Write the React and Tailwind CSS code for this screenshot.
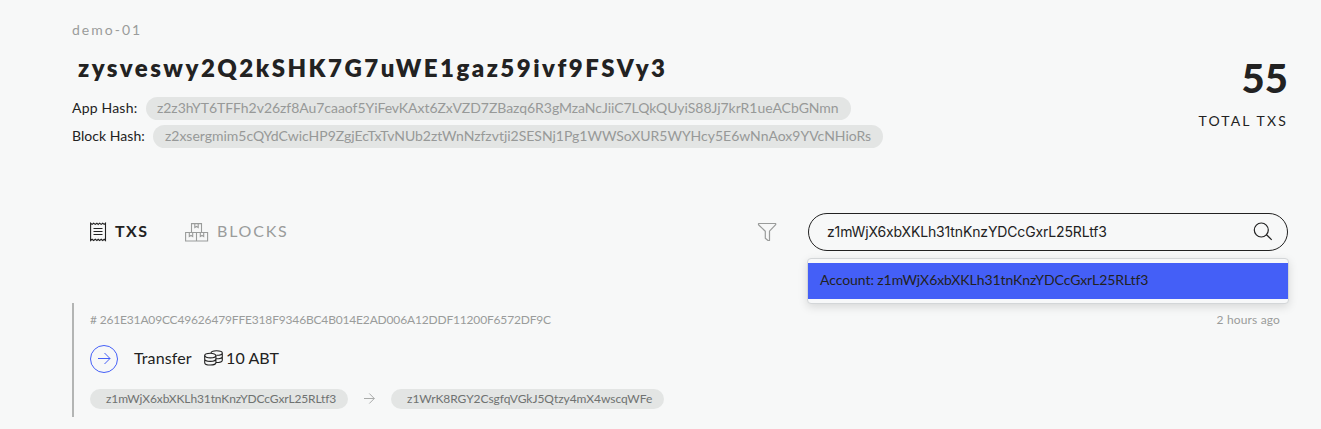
import React from "react";

function ReceiptIcon() {
  return (
    <svg width="17" height="20" viewBox="0 0 17 20" fill="none" stroke="#222" strokeWidth="1.1">
      <path d="M.6 1.2 2.1 2.400 3.600 1.200 5.300 2.400 6.900 1.200 8.200 2.400 9.600 1.200 11.200 2.400 12.700 1.200 14.200 2.400 15.500 1.200V18.500L14.200 17.300 12.700 18.500 11.200 17.300 9.600 18.500 8.200 17.300 6.900 18.500 5.300 17.300 3.600 18.500 2.100 17.300 .6 18.500Z" />
      <path d="M3.500 6.500h9M3.500 9.500h9M3.500 12.500h9" />
    </svg>
  );
}

function BoxesIcon() {
  return (
    <svg width="24" height="19" viewBox="0 0 24 19" fill="none" stroke="#9a9c9b" strokeWidth="1.1">
      <path d="M6.500 9.500V.6h10v8.900M.6 9.500h22v8.500H.6zM11.500 9.500v8.500" />
      <path d="M9.800.5v4l1.700-1 1.700 1v-4M4.300 9.500v4l1.700-1 1.700 1v-4M15.300 9.500v4l1.700-1 1.700 1v-4" />
    </svg>
  );
}

function FilterIcon() {
  return (
    <svg width="20" height="20" viewBox="0 0 20 20" fill="none" stroke="#9a9c9b" strokeWidth="1.2" strokeLinejoin="round">
      <path d="M1.500 1.500h17.200v1.200l-6.200 6.500v9.300h-1.500L8.300 16.300V9.200L1.500 2.700Z" />
    </svg>
  );
}

function SearchIcon() {
  return (
    <svg width="20" height="20" viewBox="0 0 20 20" fill="none" stroke="#222" strokeWidth="1.2">
      <circle cx="8.3" cy="7" r="7" className="translate-y-px" />
      <path d="m13.300 12.500 5.400 5.400" />
    </svg>
  );
}

function CoinsIcon() {
  return (
    <svg className="-mt-0.5" width="19" height="16" viewBox="0 0 19 16" fill="none" stroke="#222" strokeWidth="1.1">
      <ellipse cx="6.3" cy="5.6" rx="5.6" ry="2.3" />
      <path d="M.7 5.600v7.100c0 1.300 2.500 2.300 5.600 2.300s5.600-1 5.600-2.300V5.600M.7 9.100c0 1.300 2.500 2.300 5.600 2.300s5.600-1 5.600-2.300" />
      <path d="M7 3.300C7 1.800 9.400.8 12.500.8s5.800 1 5.800 2.200-2.700 2.300-5.800 2.300M18.300 3v7.200c0 1.200-2.700 2.300-6.300 2.300M18.300 6.500c0 1.300-2.700 2.300-6.300 2.300" />
    </svg>
  );
}

function Header() {
  return (
    <header className="flex h-[148px] justify-between pt-5">
      <div className="flex flex-col items-start">
        <div className="h-5 text-[14px] leading-5 tracking-[2px] text-[#9a9c9b]">demo-01</div>
        <h1 className="mt-[13px] h-8 pl-1.5 text-[24px] font-extrabold leading-[30px] tracking-[2.49px]">
          zysveswy2Q2kSHK7G7uWE1gaz59ivf9FSVy3
        </h1>
        <div className="mt-3 flex h-[23px] items-center text-[14px] leading-5">
          <span className="w-[74px] pb-0.5 tracking-[0.2px]">App Hash:</span>
          <span className="flex h-[23px] w-[705px] items-center rounded-full bg-[#e3e5e4] pb-0.5 pl-[11px] tracking-[-0.045px] text-[#979998]">
            z2z3hYT6TFFh2v26zf8Au7caaof5YiFevKAxt6ZxVZD7ZBazq6R3gMzaNcJiiC7LQkQUyiS88Jj7krR1ueACbGNmn
          </span>
        </div>
        <div className="mt-[5px] flex h-[23px] items-center text-[14px] leading-5">
          <span className="w-[81px] pb-0.5 tracking-[0.05px]">Block Hash:</span>
          <span className="flex h-[23px] w-[730px] items-center rounded-full bg-[#e3e5e4] pb-0.5 pl-3 tracking-[-0.015px] text-[#979998]">
            z2xsergmim5cQYdCwicHP9ZgjEcTxTvNUb2ztWnNzfzvtji2SESNj1Pg1WWSoXUR5WYHcy5E6wNnAox9YVcNHioRs
          </span>
        </div>
      </div>
      <div className="flex flex-col items-end pt-[34px]">
        <div className="h-12 text-[40px] font-black leading-[48px]">55</div>
        <div className="mt-[9px] h-5 text-[14px] leading-5 tracking-[2.15px]">TOTAL TXS</div>
      </div>
    </header>
  );
}

function Toolbar() {
  return (
    <div className="mt-[65px] flex h-[38px] items-center">
      <div className="flex items-center pl-[18px]">
        <ReceiptIcon />
        <span className="ml-2 w-[70px] pb-0.5 text-[16px] font-bold tracking-[1.5px]">TXS</span>
        <BoxesIcon />
        <span className="ml-2 pb-0.5 text-[16px] tracking-[1.8px] text-[#9a9c9b]">BLOCKS</span>
      </div>
      <div className="ml-auto flex items-center">
        <FilterIcon />
        <div className="relative ml-[31px] w-[480px]">
          <div className="flex h-[38px] items-center justify-between rounded-full border border-[#222] pl-[18px] pr-[14px]">
            <span className="pb-0.5 font-['Inter',sans-serif] text-[14px] tracking-[-0.14px]">z1mWjX6xbXKLh31tnKnzYDCcGxrL25RLtf3</span>
            <SearchIcon />
          </div>
          <div className="absolute -left-px top-[45px] h-[46px] w-[482px] rounded-[4px] border border-[#d3d6d8] bg-[#f7f8f9] py-1 shadow-[0_3px_10px_rgba(0,0,0,0.13)]">
            <div className="flex h-9 items-center bg-[#445ff7] pl-3 text-[14px]">
              <span className="pb-[3px] tracking-[-0.07px]">Account: z1mWjX6xbXKLh31tnKnzYDCcGxrL25RLtf3</span>
            </div>
          </div>
        </div>
      </div>
    </div>
  );
}

function Transaction() {
  return (
    <section className="mt-[52px] h-[114px] border-l-2 border-[#b3b5b4] pl-4 pr-2 pt-2">
      <div className="flex h-[18px] items-center justify-between text-[12px] text-[#9a9c9b]">
        <span className="tracking-[-0.17px]"># 261E31A09CC49626479FFE318F9346BC4B014E2AD006A12DDF11200F6572DF9C</span>
        <span className="tracking-[0.15px]">2 hours ago</span>
      </div>
      <div className="mt-4 flex h-7 items-center text-[16px]">
        <svg width="28" height="28" viewBox="0 0 28 28" fill="none" stroke="#445ff7">
          <circle cx="14" cy="14" r="13.500" />
          <path d="M8 13.500h12M14.500 8l5.500 5.500-5.500 5.500" />
        </svg>
        <span className="ml-4 w-[70px] pb-0.5 tracking-[0.1px]">Transfer</span>
        <CoinsIcon />
        <span className="ml-[3px] pb-0.5 tracking-[0.1px]">10 ABT</span>
      </div>
      <div className="mt-4 flex h-5 items-center text-[12px] text-[#6f7271]">
        <span className="flex h-5 w-[258px] items-center rounded-full bg-[#e3e5e4] pl-4 tracking-[-0.12px]">z1mWjX6xbXKLh31tnKnzYDCcGxrL25RLtf3</span>
        <svg className="mx-4" width="11" height="12" viewBox="0 0 11 12" fill="none" stroke="#a9abaa">
          <path d="M0 5.500h10.300M5.300.5l5 5-5 5" />
        </svg>
        <span className="flex h-5 w-[273px] items-center rounded-full bg-[#e3e5e4] pl-4 tracking-[-0.04px]">z1WrK8RGY2CsgfqVGkJ5Qtzy4mX4wscqWFe</span>
      </div>
    </section>
  );
}

export default function App() {
  return (
    <main className="h-[429px] w-[1321px] overflow-hidden whitespace-nowrap bg-[#f7f8f8] pl-[72px] pr-[33px] font-['Lato',sans-serif] text-[#222]">
      <Header />
      <Toolbar />
      <Transaction />
    </main>
  );
}
